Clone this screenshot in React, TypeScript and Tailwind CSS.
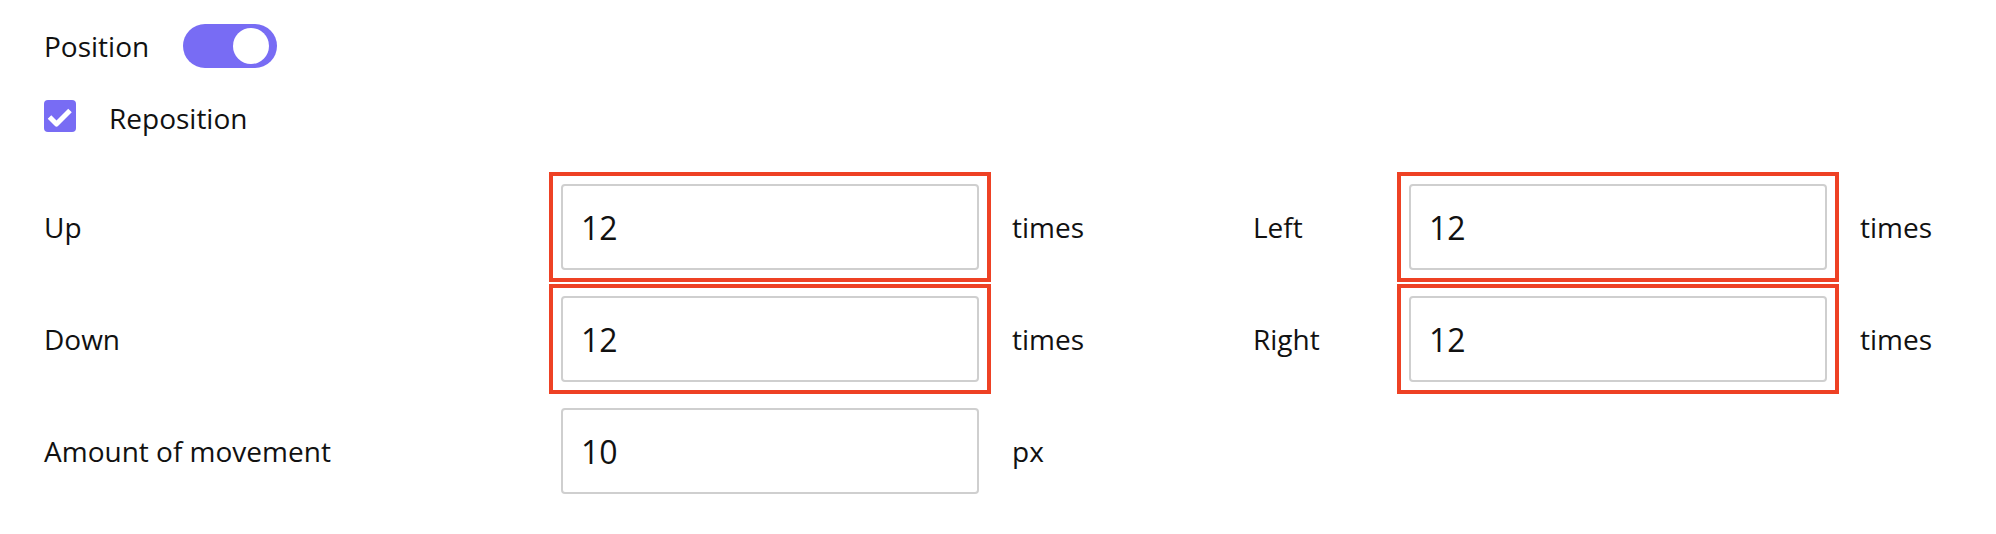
import { useState } from "react"

type Field = { label: string; value: string; unit: string; flagged?: boolean }

// filas del formulario: izquierda / derecha
const rows: { left: Field; right?: Field }[] = [
  { left: { label: "Up", value: "12", unit: "times", flagged: true }, right: { label: "Left", value: "12", unit: "times", flagged: true } },
  { left: { label: "Down", value: "12", unit: "times", flagged: true }, right: { label: "Right", value: "12", unit: "times", flagged: true } },
  { left: { label: "Amount of movement", value: "10", unit: "px" } },
]

function Toggle({ active, onChange }: { active: boolean; onChange: (v: boolean) => void }) {
  return (
    <button
      onClick={() => onChange(!active)}
      className={`w-[94px] h-[44px] rounded-full flex items-center flex-shrink-0 ${active ? "bg-[#786cf4] justify-end pr-[8px]" : "bg-[#ccc] justify-start pl-[4px]"}`}
    >
      <span className="w-[36px] h-[36px] bg-white rounded-full" />
    </button>
  )
}

function Checkbox({ checked, onChange }: { checked: boolean; onChange: (v: boolean) => void }) {
  return (
    <button
      onClick={() => onChange(!checked)}
      className={`w-[32px] h-[32px] rounded-[4px] flex-shrink-0 flex items-center justify-center ${checked ? "bg-[#786cf4]" : "bg-white border-2 border-[#ccc]"}`}
    >
      {checked && (
        <svg width="32" height="32" viewBox="0 0 32 32">
          <polyline points="5.5,17 12.5,24 26,10.5" fill="none" stroke="white" strokeWidth="5" strokeLinejoin="round" />
        </svg>
      )}
    </button>
  )
}

function NumberInput({ value, flagged }: { value: string; flagged?: boolean }) {
  const input = (
    <input
      defaultValue={value}
      className="w-[418px] h-[86px] flex-shrink-0 border-2 border-[#cfcfcf] rounded-[4px] pl-[18px] text-[32px] text-[#111] bg-white outline-none"
    />
  )
  if (!flagged) return input
  // marco rojo de error, sin ocupar espacio en el layout
  return <div className="-m-[12px] p-[8px] border-4 border-[#ee4124] flex-shrink-0 flex">{input}</div>
}

export default function App() {
  const [position, setPosition] = useState(true)
  const [reposition, setReposition] = useState(true)

  return (
    <div className="w-[1996px] h-[534px] bg-white pl-[44px] pt-[24px] text-[28px] leading-[38px] text-[#111] font-['Open_Sans',sans-serif]">
      {/* Position */}
      <div className="flex items-center gap-[34px] h-[44px]">
        <span>Position</span>
        <Toggle active={position} onChange={setPosition} />
      </div>

      {/* Reposition */}
      <div className="flex items-center gap-[33px] h-[32px] mt-[32px]">
        <Checkbox checked={reposition} onChange={setReposition} />
        <span className="pt-[4px]">Reposition</span>
      </div>

      <div className="flex flex-col gap-[26px] mt-[52px]">
        {rows.map((row) => (
          <div key={row.left.label} className="flex items-center h-[86px]">
            <span className="w-[517px] flex-shrink-0">{row.left.label}</span>
            <NumberInput value={row.left.value} flagged={row.left.flagged} />
            <span className="w-[274px] pl-[33px] flex-shrink-0">{row.left.unit}</span>
            {row.right && (
              <>
                <span className="w-[156px] flex-shrink-0">{row.right.label}</span>
                <NumberInput value={row.right.value} flagged={row.right.flagged} />
                <span className="pl-[33px]">{row.right.unit}</span>
              </>
            )}
          </div>
        ))}
      </div>
    </div>
  )
}
